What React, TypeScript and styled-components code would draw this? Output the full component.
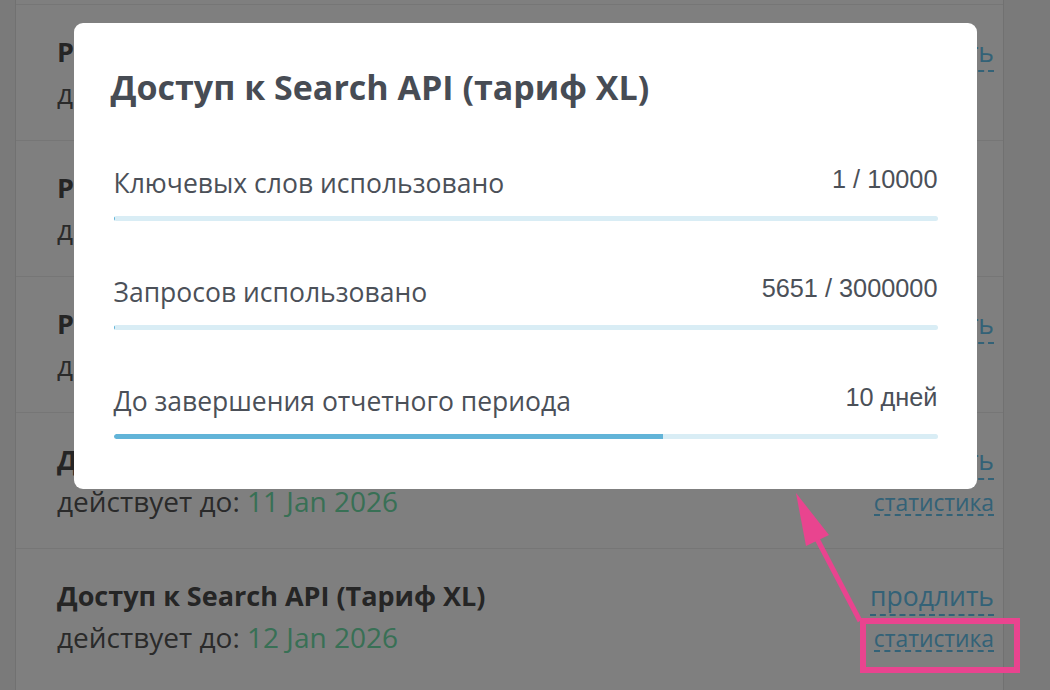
import React from "react";
import styled, { createGlobalStyle } from "styled-components";

const GlobalStyle = createGlobalStyle`
  html, body {
    margin: 0;
    padding: 0;
    background: #f4f4f4;
    font-family: "Open Sans", "Noto Sans", sans-serif;
  }
  * { box-sizing: border-box; }
`;

const Page = styled.div`
  position: relative;
  width: 1050px;
  height: 690px;
  overflow: hidden;
`;

const Panel = styled.div`
  margin-left: 15px;
  padding-top: 4px;
  width: 989px;
  min-height: 690px;
  background: #ffffff;
  border-left: 1px solid #e2e2e2;
  border-right: 1px solid #e2e2e2;
`;

const Row = styled.div`
  height: 136px;
  border-top: 1px solid #ececec;
  display: flex;
  justify-content: space-between;
  align-items: flex-start;
  padding: 29px 9px 0 41px;
`;

const Info = styled.div`
  display: flex;
  flex-direction: column;
  gap: 5px;
`;

const RowTitle = styled.div`
  font-size: 27px;
  line-height: 36px;
  font-weight: 700;
  color: #4a4a4a;
`;

const RowSub = styled.div`
  font-size: 28px;
  line-height: 36px;
  color: #545454;
`;

const DateText = styled.span`
  color: #70e0aa;
`;

const Links = styled.div`
  display: flex;
  flex-direction: column;
  align-items: flex-end;
`;

const Link = styled.a<{ $small?: boolean }>`
  display: block;
  font-size: ${(p) => (p.$small ? "22.8px" : "26.5px")};
  line-height: ${(p) => (p.$small ? "22px" : "36px")};
  color: #66c4ee;
  text-decoration: none;
  border-bottom: 2px dashed #66c4ee;
  margin-top: ${(p) => (p.$small ? "12px" : "0")};
  cursor: pointer;
`;

const Overlay = styled.div`
  position: absolute;
  inset: 0;
  background: rgba(0, 0, 0, 0.5);
  display: flex;
  justify-content: center;
  align-items: flex-start;
  padding-top: 23px;
`;

const Modal = styled.div`
  width: 903px;
  background: #ffffff;
  border-radius: 9px;
  padding: 43px 39px 50px 40px;
`;

const ModalTitle = styled.h2`
  margin: 0 0 0 -3px;
  font-size: 34px;
  line-height: 42px;
  font-weight: 700;
  color: #474c54;
`;

const Stats = styled.div`
  margin-top: 59px;
  display: flex;
  flex-direction: column;
  gap: 55px;
`;

const Stat = styled.div`
  display: flex;
  flex-direction: column;
  gap: 17px;
`;

const StatHead = styled.div`
  display: flex;
  justify-content: space-between;
  align-items: flex-start;
`;

const StatLabel = styled.div`
  font-size: 26.5px;
  line-height: 32px;
  color: #4b5058;
`;

const StatValue = styled.div`
  font-family: "Liberation Sans", Arial, sans-serif;
  font-size: 25.3px;
  line-height: 24px;
  color: #4b5058;
`;

const Track = styled.div`
  height: 5px;
  border-radius: 3px;
  background: #d9edf5;
  overflow: hidden;
`;

const Fill = styled.div`
  height: 100%;
  background: #62b4d8;
  border-radius: 3px 0 0 3px;
`;

const Annotation = styled.svg`
  position: absolute;
  inset: 0;
  pointer-events: none;
`;

type RowData = {
  title: string;
  date: string;
  renew: boolean;
  stats: boolean;
};

const rows: RowData[] = [
  { title: "Расширение лимитов (тариф L)", date: "05 Jan 2026", renew: true, stats: false },
  { title: "Резервирование ключей", date: "08 Jan 2026", renew: false, stats: false },
  { title: "Расширение лимитов (тариф XL)", date: "10 Jan 2026", renew: true, stats: false },
  { title: "Доступ к Search API (Тариф XL)", date: "11 Jan 2026", renew: true, stats: true },
  { title: "Доступ к Search API (Тариф XL)", date: "12 Jan 2026", renew: true, stats: true },
];

const stats = [
  { label: "Ключевых слов использовано", value: "1 / 10000", ratio: 1 / 10000 },
  { label: "Запросов использовано", value: "5651 / 3000000", ratio: 5651 / 3000000 },
  { label: "До завершения отчетного периода", value: "10 дней", ratio: 0.667 },
];

export default function App() {
  return (
    <Page>
      <GlobalStyle />
      <Panel>
        {rows.map((r, i) => (
          <Row key={i}>
            <Info>
              <RowTitle>{r.title}</RowTitle>
              <RowSub>
                действует до: <DateText>{r.date}</DateText>
              </RowSub>
            </Info>
            <Links>
              {r.renew && <Link>продлить</Link>}
              {r.stats && <Link $small>статистика</Link>}
            </Links>
          </Row>
        ))}
      </Panel>
      <Overlay>
        <Modal>
          <ModalTitle>Доступ к Search API (тариф XL)</ModalTitle>
          <Stats>
            {stats.map((s) => (
              <Stat key={s.label}>
                <StatHead>
                  <StatLabel>{s.label}</StatLabel>
                  <StatValue>{s.value}</StatValue>
                </StatHead>
                <Track>
                  <Fill style={{ width: `${s.ratio * 100}%` }} />
                </Track>
              </Stat>
            ))}
          </Stats>
        </Modal>
      </Overlay>
      <Annotation width="1050" height="690" viewBox="0 0 1050 690">
        <rect x="863" y="621" width="154" height="49" fill="none" stroke="#e9448f" strokeWidth="6" />
        <line x1="860" y1="621" x2="815" y2="535" stroke="#e9448f" strokeWidth="5" />
        <polygon points="796,493 806,546 829,535" fill="#e9448f" />
      </Annotation>
    </Page>
  );
}
